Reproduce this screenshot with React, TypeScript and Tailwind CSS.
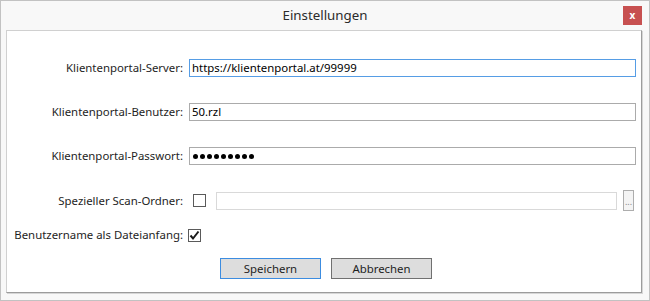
const FONT = "font-['Segoe_UI','Noto_Sans','Open_Sans',sans-serif]"

function Check({ checked }: { checked?: boolean }) {
  return (
    <div className="w-[13px] h-[13px] border border-[#5a5a5a] bg-white flex items-center justify-center shrink-0">
      {checked && (
        <svg width="11" height="11" viewBox="0 0 11 11">
          <path d="M1.5 5.5 L4 8.5 L9.5 1.5" fill="none" stroke="#1a1a1a" strokeWidth="2" />
        </svg>
      )}
    </div>
  )
}

function Label({ text }: { text: string }) {
  return (
    <span className="w-[176px] shrink-0 flex justify-end whitespace-nowrap text-[11.4px] text-[#1e1e1e]">{text}</span>
  )
}

function Row({ label, children, className = '' }: { label: string; children: React.ReactNode; className?: string }) {
  return (
    <div className={`flex items-center ${className}`}>
      <Label text={label} />
      <div className="ml-[6px] flex-1 flex items-center h-full">{children}</div>
    </div>
  )
}

export default function App() {
  return (
    <div className={`w-[650px] h-[301px] border border-[#c2c2c2] bg-[#f8f8f8] flex flex-col ${FONT}`}>
      {/* title bar */}
      <div className="relative h-[29px] shrink-0 flex items-center justify-center">
        <span className="text-[13.3px] text-[#2b2b2b] leading-none">Einstellungen</span>
        <div className="absolute top-[5px] right-[7px] w-[19px] h-[19px] bg-[#c75050] flex items-center justify-center">
          <span className="text-white text-[10px] font-bold leading-none -mt-[1px]">x</span>
        </div>
      </div>

      {/* content panel */}
      <div className="flex-1 ml-[5px] mr-[7px] mb-[7px] bg-white border border-[#d0d0d0] border-r-[#9c9c9c] border-b-[#9c9c9c] shadow-[1px_1px_0_#d6d6d6] pt-[28px] pr-[5px] flex flex-col">
        <Row label="Klientenportal-Server:" className="h-[18px]">
          <div className="w-full h-full border border-[#569de5] pl-[2px] flex items-center text-[11.4px] text-black">
            https://klientenportal.at/99999
          </div>
        </Row>

        <Row label="Klientenportal-Benutzer:" className="h-[18px] mt-[26px]">
          <div className="w-full h-full border border-[#ababab] pl-[2px] flex items-center text-[11.4px] text-black">
            50.rzl
          </div>
        </Row>

        <Row label="Klientenportal-Passwort:" className="h-[18px] mt-[26px]">
          <div className="w-full h-full border border-[#ababab] pl-[3px] flex items-center gap-[2px]">
            {Array.from({ length: 9 }).map((_, i) => (
              <span key={i} className="w-[5px] h-[5px] rounded-full bg-black" />
            ))}
          </div>
        </Row>

        <Row label="Spezieller Scan-Ordner:" className="h-[21px] mt-[25px]">
          <div className="ml-[4px]">
            <Check />
          </div>
          <div className="ml-[10px] flex-1 h-[18px] border border-[#d9d9d9]" />
          <div className="ml-[6px] mr-[2px] w-[11px] h-[21px] border border-[#adadad] bg-[#f4f4f4] flex items-end justify-center pb-[4px]">
            <span className="text-[9px] text-[#8a8a8a] leading-none">...</span>
          </div>
        </Row>

        <div className="flex items-center h-[18px] mt-[15px]">
          <Label text="Benutzername als Dateianfang:" />
          <div className="ml-[5px]">
            <Check checked />
          </div>
        </div>

        <div className="flex mt-[14px] ml-[213px] gap-[10px]">
          <button className="w-[101px] h-[21px] border border-[#3c8ce0] bg-[#dddddd] text-[11.4px] text-[#1e1e1e] flex items-center justify-center">
            Speichern
          </button>
          <button className="w-[101px] h-[21px] border border-[#707070] bg-[#dddddd] text-[11.4px] text-[#1e1e1e] flex items-center justify-center">
            Abbrechen
          </button>
        </div>
      </div>
    </div>
  )
}
